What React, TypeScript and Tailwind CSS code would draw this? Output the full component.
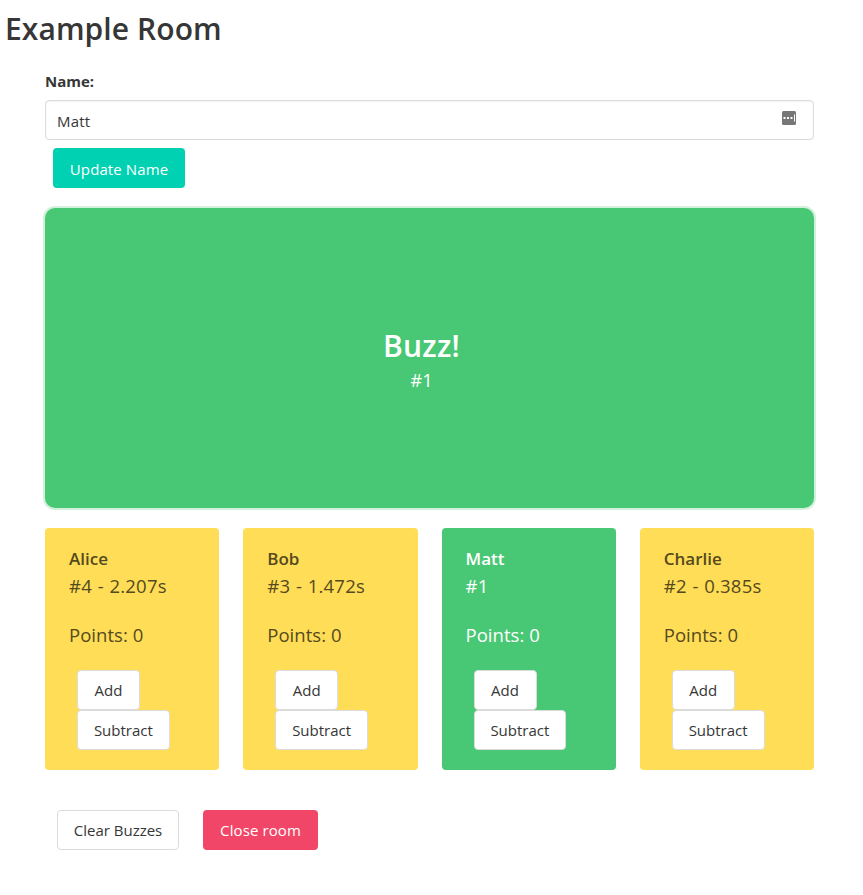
import type { ReactNode } from "react";

type Player = {
  name: string;
  result: string;
  points: number;
  first?: boolean;
};

const players: Player[] = [
  { name: "Alice", result: "#4 - 2.207s", points: 0 },
  { name: "Bob", result: "#3 - 1.472s", points: 0 },
  { name: "Matt", result: "#1", points: 0, first: true },
  { name: "Charlie", result: "#2 - 0.385s", points: 0 },
];

function Button({ className, children }: { className: string; children: ReactNode }) {
  return (
    <button
      className={`flex h-10 items-center justify-center whitespace-nowrap rounded-[4px] border text-[15px] leading-6 ${className}`}
    >
      {children}
    </button>
  );
}

function PlayerCard({ name, result, points, first }: Player) {
  return (
    <article
      className={`h-[242px] rounded-[4px] px-6 pt-[19px] ${
        first ? "bg-[#48c774] text-white" : "bg-[#ffdd57] text-[#554a1d]"
      }`}
    >
      <h2 className="h-[23px] text-[17px] font-semibold leading-[23px]">{name}</h2>
      <p className="mt-[1px] h-[30px] whitespace-nowrap text-[18.5px] leading-[30px] tracking-[0.2px] [word-spacing:0.7px]">
        {result}
      </p>
      <p className="mt-[19px] h-[30px] text-[18.5px] leading-[30px] tracking-[0.04px]">Points: {points}</p>
      <div className="ml-2 mt-[20px] flex flex-col items-start">
        <Button className="w-[63px] border-[#dbdbdb] bg-white text-[#363636]">Add</Button>
        <Button className="w-[92.75px] border-[#dbdbdb] bg-white text-[#363636]">Subtract</Button>
      </div>
    </article>
  );
}

export default function App() {
  return (
    <main className="h-[895px] w-[863px] overflow-hidden bg-white font-['Open_Sans','Noto_Sans',sans-serif] text-[#363636]">
      <h1 className="h-[66px] pl-[5px] pt-[9px] text-[30px] font-semibold leading-10 tracking-[0.08px]">Example Room</h1>
      <div className="ml-[45px] w-[769px]">
        <label htmlFor="name" className="block h-[34px] pt-[3px] text-[15px] font-bold leading-6">
          Name:
        </label>
        <div className="flex h-10 items-center justify-between rounded-[4px] border border-[#dbdbdb] pl-[11px] pr-[17px] shadow-[inset_0_1px_2px_rgba(10,10,10,0.05)]">
          <input
            id="name"
            defaultValue="Matt"
            className="w-[400px] bg-transparent pt-[1px] text-[15px] leading-6 tracking-[0.2px] outline-none"
          />
          <svg className="mb-[4px] h-[14px] w-[14px]" viewBox="0 0 14 14">
            <rect width="14" height="14" rx="1.5" fill="#777777" />
            <rect x="1.5" y="6" width="2" height="2" fill="white" />
            <rect x="5" y="6" width="2" height="2" fill="white" />
            <rect x="8.5" y="6" width="2" height="2" fill="white" />
            <rect x="12" y="3.5" width="1" height="7" fill="white" />
          </svg>
        </div>
        <Button className="ml-2 mt-2 w-[132px] border-transparent bg-[#00d1b2] pt-[2px] tracking-[0.1px] text-white">
          Update Name
        </Button>
        <button className="mt-5 flex h-[300px] w-full flex-col items-center rounded-[10px] bg-[#48c774] pr-[16px] pt-[118px] text-white shadow-[0_0_0_2px_rgba(72,199,116,0.25)]">
          <span className="text-[30px] font-semibold leading-10 tracking-[0.2px]">Buzz!</span>
          <span className="-mt-px text-[18.5px] leading-[29px]">#1</span>
        </button>
        <section className="mt-5 grid grid-cols-4 gap-6">
          {players.map((player) => (
            <PlayerCard key={player.name} {...player} />
          ))}
        </section>
        <div className="ml-3 mt-10 flex gap-6">
          <Button className="w-[122px] border-[#dbdbdb] bg-white text-[#363636]">Clear Buzzes</Button>
          <Button className="w-[115px] border-transparent bg-[#f14668] tracking-[0.1px] text-white">Close room</Button>
        </div>
      </div>
    </main>
  );
}
